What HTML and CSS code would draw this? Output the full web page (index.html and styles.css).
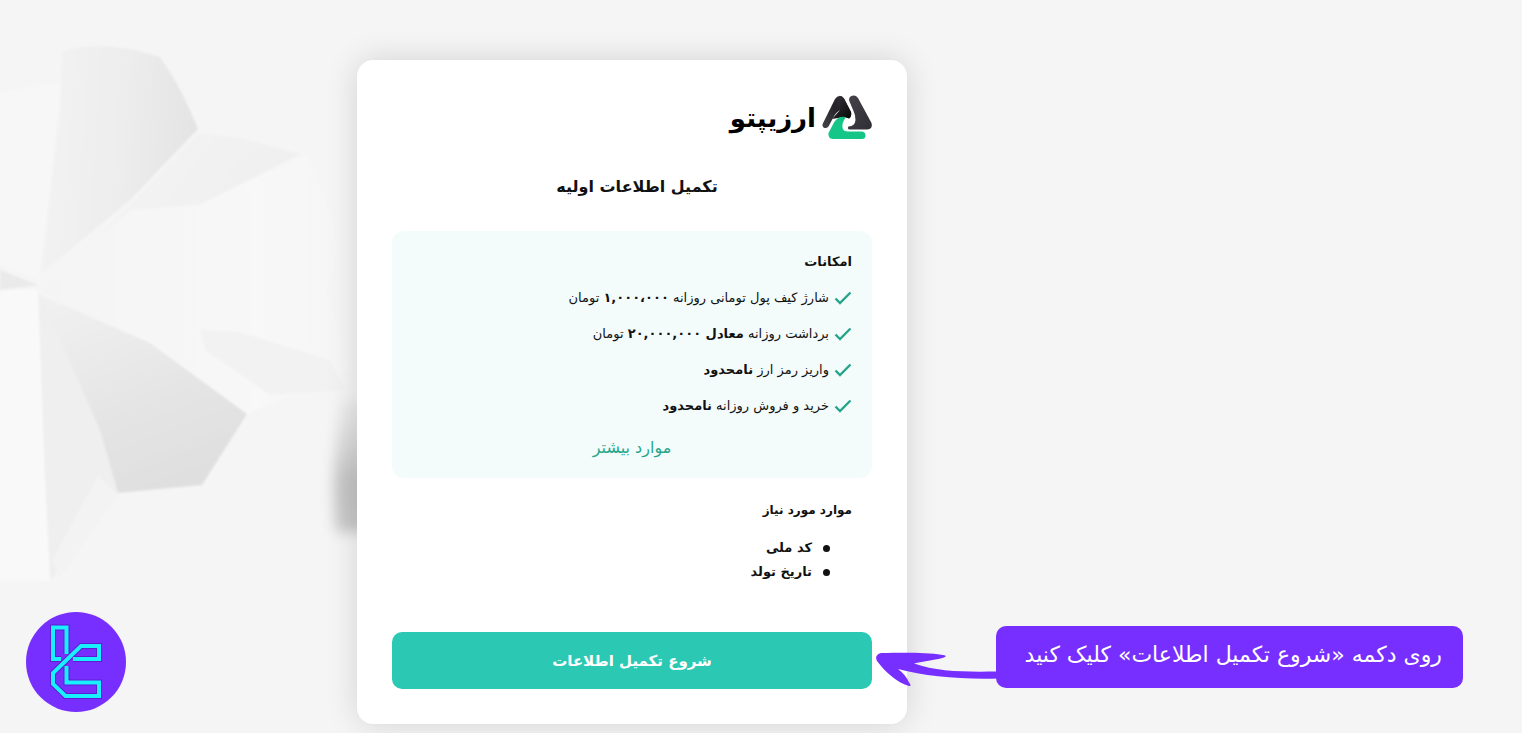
FILE: index.html
```html
<!DOCTYPE html>
<html lang="fa" dir="rtl">
<head>
<meta charset="utf-8">
<meta name="viewport" content="width=device-width, initial-scale=1">
<title>تکمیل اطلاعات اولیه</title>
<link rel="stylesheet" href="styles.css">
</head>
<body>
<svg class="backdrop" width="380" height="600" viewBox="0 0 380 600" aria-hidden="true">
  <defs>
    <linearGradient id="g1" x1="0" y1=".4" x2="1" y2=".5"><stop offset="0" stop-color="#f3f3f3"/><stop offset=".5" stop-color="#ededed"/><stop offset="1" stop-color="#e3e3e3"/></linearGradient>
    <linearGradient id="g2" x1=".2" y1="0" x2=".6" y2="1"><stop offset="0" stop-color="#f0f0f0"/><stop offset=".6" stop-color="#e4e4e4"/><stop offset="1" stop-color="#dfdfdf"/></linearGradient>
    <linearGradient id="g3" x1="0" y1="0" x2="1" y2="0"><stop offset="0" stop-color="#f4f4f4"/><stop offset=".7" stop-color="#f8f8f8"/><stop offset="1" stop-color="#f6f6f6"/></linearGradient>
    <linearGradient id="g4" x1="0" y1="0" x2="0" y2="1"><stop offset="0" stop-color="#d8d8d8" stop-opacity=".3"/><stop offset=".6" stop-color="#c4c4c4"/><stop offset="1" stop-color="#c8c8c8"/></linearGradient>
    <linearGradient id="g5" x1="0" y1="0" x2="1" y2=".4"><stop offset="0" stop-color="#f5f5f5"/><stop offset="1" stop-color="#efefef"/></linearGradient>
    <filter id="soft" x="-50%" y="-20%" width="200%" height="140%"><feGaussianBlur stdDeviation="1"/></filter>
    <filter id="softer" x="-80%" y="-20%" width="260%" height="140%"><feGaussianBlur stdDeviation="7"/></filter>
  </defs>
  <g filter="url(#soft)">
    <path fill="#f7f7f7" d="M0 92 62 82 40 280 0 265z"/>
    <path fill="url(#g1)" d="M62 52Q100 38 160 57Q182 88 198 129L130 200 40 275 60 110z"/>
    <path fill="url(#g5)" d="M198 133 240 138 300 154 200 205 90 245z"/>
    <path fill="url(#g3)" d="M130 210 198 205 306 155Q328 200 338 250L325 290 350 370 247 414 40 290z"/>
    <path fill="#f2f2f2" d="M200 330 240 332 330 360 345 390 270 395 205 350z"/>
    <path fill="#eaeaea" d="M0 270 38 285 0 290z"/>
    <path fill="#efefef" d="M38 290 108 440 118 495 50 581 42 420z"/>
    <path fill="#f3f3f3" d="M98 475 118 495 60 578 52 560z"/>
    <path fill="url(#g2)" d="M40 295 150 343 247 414 202 485 118 493 100 430z"/>
    <path fill="#f9f9f9" d="M0 290H38L45 480 50 581 0 580z"/>
  </g>
  <path filter="url(#softer)" fill="url(#g4)" d="M342 400H380V532H336Q330 470 342 400z"/>
</svg>

<main class="page">
  <section class="card">
    <div class="brand">
      <svg class="brand-mark" width="50" height="46" viewBox="0 0 50 46" aria-hidden="true">
        <defs>
          <linearGradient id="dark" x1="0" y1="1" x2="1" y2="0"><stop offset="0" stop-color="#46434b"/><stop offset=".55" stop-color="#252329"/><stop offset="1" stop-color="#3b383f"/></linearGradient>
          <linearGradient id="fold" x1="0" y1="0" x2="1" y2="1"><stop offset="0" stop-color="#3b383f"/><stop offset="1" stop-color="#050506"/></linearGradient>
          <linearGradient id="dark2" x1="0" y1="0" x2="1" y2="1"><stop offset="0" stop-color="#46434b"/><stop offset="1" stop-color="#2f2d34"/></linearGradient>
          <linearGradient id="green" x1="0" y1="1" x2="1" y2="0"><stop offset="0" stop-color="#12c98a"/><stop offset=".6" stop-color="#16c487"/><stop offset="1" stop-color="#0a9a68"/></linearGradient>
        </defs>
        <path fill="url(#dark)" d="M.6 29 13 4Q17-1.500 22 3.500L29 17Q30 21 27 23.500L18.500 15Q14 17 11 23L6.500 31.500Q4 34 1.500 32.500 0 31 .6 29z"/>
        <path fill="url(#fold)" d="M17.500.8Q20.500 1 22 3.500L29 17Q30 21 27 23.500L22 22 10 24 18 15z"/>
        <path fill="url(#dark2)" d="M28.500 1.500Q33-1 36 3L49.500 28Q51 34 45.500 34.500H27Q25 33.500 26.500 31.500 33 31 33.500 25 33.500 20 31.500 16L27.300 6Q26.500 3 28.500 1.500z"/>
        <path fill="url(#green)" d="M6.500 38 12 27.500Q16 20.500 24 22 19.500 28 20.500 33 21.500 36.500 26 36.500H40Q43.500 37 43.500 40.500 43.500 44 40 44H11Q5.500 43.500 6.500 38z"/>
      </svg>
      <span class="brand-name">ارزیپتو</span>
    </div>

    <h1 class="title">تکمیل اطلاعات اولیه</h1>

    <div class="features">
      <h2 class="heading">امکانات</h2>
      <ul class="checks">
        <li><svg class="tick" viewBox="0 0 18 14" aria-hidden="true"><path d="M1.500 7.500 6 12 16.500 1.500"/></svg><span>شارژ کیف پول تومانی روزانه <b>۱,۰۰۰،۰۰۰</b> تومان</span></li>
        <li><svg class="tick" viewBox="0 0 18 14" aria-hidden="true"><path d="M1.500 7.500 6 12 16.500 1.500"/></svg><span>برداشت روزانه <b>معادل ۲۰,۰۰۰,۰۰۰</b> تومان</span></li>
        <li><svg class="tick" viewBox="0 0 18 14" aria-hidden="true"><path d="M1.500 7.500 6 12 16.500 1.500"/></svg><span>واریز رمز ارز <b>نامحدود</b></span></li>
        <li><svg class="tick" viewBox="0 0 18 14" aria-hidden="true"><path d="M1.500 7.500 6 12 16.500 1.500"/></svg><span>خرید و فروش روزانه <b>نامحدود</b></span></li>
      </ul>
      <a class="more" href="#">موارد بیشتر</a>
    </div>

    <div class="needs">
      <h2 class="heading">موارد مورد نیاز</h2>
      <ul class="bullets">
        <li>کد ملی</li>
        <li>تاریخ تولد</li>
      </ul>
    </div>

    <button class="start" type="button">شروع تکمیل اطلاعات</button>
  </section>

  <aside class="callout">
    <svg class="arrow" width="122" height="40" viewBox="0 0 122 40" aria-hidden="true">
      <path fill="#772fff" d="M122 19.500C90 20 62 20 38 11.500 50 9 62 7.500 68 5.500Q72 3.500 67 3C48 0 24 1 5 1Q-2 3 1 9C9 20 22 31 33 34Q36 34 33 30.500 30 23 22 17 64 28 122 26.500z"/>
    </svg>
    روی دکمه «شروع تکمیل اطلاعات» کلیک کنید
  </aside>
</main>

<svg class="badge" width="100" height="100" viewBox="0 0 100 100" role="img" aria-label="TC">
  <circle cx="50" cy="50" r="50" fill="#772fff"/>
  <g fill="none" stroke="#5a1fd0" stroke-width="6">
    <path d="M35 47H27V15.500H40.500V42M47 47H73V34H55L27 61V72L39.500 84H73V70.500H40.500V54"/>
  </g>
  <g fill="none" stroke="#19f0ff" stroke-width="4">
    <path d="M35 47H27V15.500H40.500V42"/>
    <path d="M47 47H73V34H55L27 61V72L39.500 84H73V70.500H40.500V54"/>
  </g>
</svg>
</body>
</html>
```
FILE: styles.css
```css
* { box-sizing: border-box; }

body {
  margin: 0;
  min-height: 100vh;
  position: relative;
  background: #f5f5f5;
  color: #111;
  font-family: "DejaVu Sans", sans-serif;
  font-size: 13px;
  line-height: 24px;
}

h1, h2, ul { margin: 0; padding: 0; }

.backdrop {
  position: absolute;
  left: 0;
  top: 0;
  z-index: -1;
}

.page {
  display: grid;
  grid-template-columns: 615fr 550px 357fr;
  padding: 60px 0 9px;
}

.card {
  grid-area: 1 / 2;
  display: flex;
  flex-direction: column;
  padding: 35px;
  border-radius: 16px;
  background: #fff;
  box-shadow: 0 0 32px rgba(0, 0, 0, .14);
}

.brand {
  display: flex;
  align-items: center;
  gap: 6px;
  height: 46px;
}

.brand-name {
  color: #000;
  font-size: 26px;
  font-weight: 700;
  line-height: 40px;
}

.title {
  margin-top: 34px;
  padding-left: 10px;
  text-align: center;
  font-size: 16px;
  font-weight: 700;
  line-height: 24px;
}

.features {
  display: flex;
  flex-direction: column;
  margin-top: 32px;
  padding: 19px 20px 18px;
  border-radius: 12px;
  background: #f3fcfb;
}

.heading {
  font-size: 13px;
  font-weight: 700;
  line-height: 24px;
}

.needs .heading { font-size: 12px; }

.checks {
  display: grid;
  gap: 12px;
  margin-top: 12px;
  list-style: none;
}

.checks li {
  display: flex;
  align-items: center;
  gap: 5px;
}

.tick {
  width: 18px;
  height: 14px;
  fill: none;
  stroke: #27a58c;
  stroke-width: 2.4;
}

.more {
  align-self: center;
  margin-top: 18px;
  color: #27a58c;
  font-size: 16px;
  text-decoration: none;
}

.needs { padding: 20px 20px 0; }

.bullets {
  margin-top: 14px;
  padding-right: 22px;
  font-weight: 700;
  list-style: none;
}

.bullets li {
  display: flex;
  align-items: center;
  gap: 11px;
}

.bullets li::before {
  content: "";
  width: 7px;
  height: 7px;
  border-radius: 50%;
  background: #111;
}

.start {
  margin-top: 48px;
  height: 57px;
  border: 0;
  border-radius: 10px;
  background: #2bc9b4;
  color: #fff;
  font: 700 15px "DejaVu Sans", sans-serif;
}

.callout {
  grid-area: 1 / 1;
  align-self: end;
  justify-self: start;
  position: relative;
  margin: 0 59px 36px 0;
  padding: 11px 21px 15px 29px;
  border-radius: 10px;
  background: #772fff;
  color: #fff;
  font-size: 22px;
  line-height: 36px;
  white-space: nowrap;
}

.arrow {
  position: absolute;
  left: -120px;
  top: 26px;
}

.badge {
  position: absolute;
  left: 26px;
  bottom: 21px;
}
```
